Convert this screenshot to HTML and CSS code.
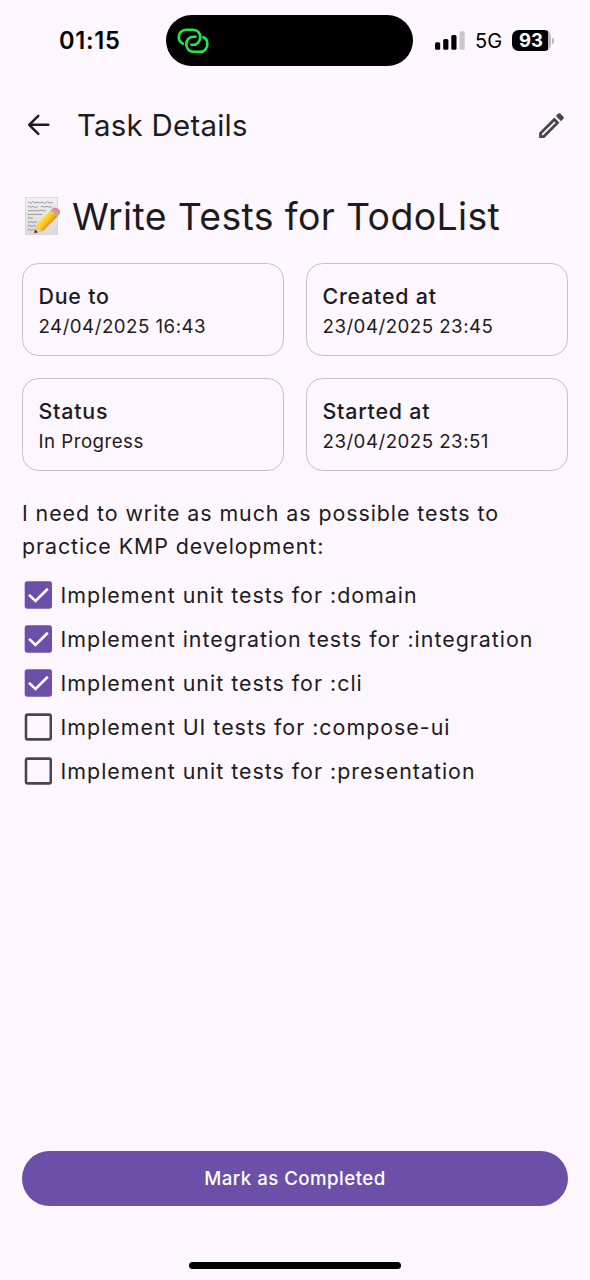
FILE: index.html
```html
<!DOCTYPE html>
<html lang="en">
<head>
<meta charset="utf-8">
<title>Task Details</title>
<link rel="stylesheet" href="styles.css">
</head>
<body>
<div class="screen">
  <header class="status-bar">
    <div class="clock">01:15</div>
    <div class="island">
      <svg class="link-icon" viewBox="0 0 32 26" width="32" height="26" fill="none" stroke="#1fe94f" stroke-width="2.6" stroke-linecap="round">
        <path d="M5.8 15.6C3.4 14.4 1.8 12.1 1.8 9.3C1.8 5 4.9 1.8 9.1 1.8H16C20.4 1.8 23.3 5 23.3 9.1C23.3 13.3 20.2 16.8 16.2 16.8H14.4"/>
        <path d="M18.4 8.8H16C12.2 8.8 9.3 12 9.3 16.1C9.3 20.5 12.2 23.8 16.2 23.8H23.1C27.5 23.8 30.4 20.3 30.4 16.1C30.4 12.8 29 10.3 26.4 9.3"/>
      </svg>
    </div>
    <div class="indicators">
      <svg class="signal" viewBox="0 0 30 19" width="30" height="19">
        <rect x="0" y="11.3" width="5.2" height="7.4" rx="1.5"/>
        <rect x="8.2" y="8" width="5.2" height="10.7" rx="1.5"/>
        <rect x="16.3" y="4" width="5.2" height="14.7" rx="1.5"/>
        <rect x="24.5" y="0.2" width="5.2" height="18.5" rx="1.5" fill="#cbc5cd"/>
      </svg>
      <span class="network">5G</span>
      <div class="battery"><div class="battery-body">93</div><div class="battery-tip"></div></div>
    </div>
  </header>

  <nav class="app-bar">
    <svg class="back" viewBox="0 0 24 24" width="24" height="24" fill="none" stroke="#1d1b20" stroke-width="2.5" stroke-linecap="round" stroke-linejoin="round">
      <path d="M21.3 11.8H2.2M11.3 2.8L2.2 11.8L11.3 20.8"/>
    </svg>
    <h1 class="bar-title">Task Details</h1>
    <svg class="edit" viewBox="0 0 24 24" width="33" height="33" fill="#49454f">
      <path d="M14.06 9.02l.92.92L5.92 19H5v-.92l9.06-9.06M17.66 3c-.25 0-.51.1-.7.29l-1.83 1.83 3.75 3.75 1.83-1.83c.39-.39.39-1.02 0-1.41l-2.34-2.34c-.2-.2-.45-.29-.71-.29zm-3.6 3.19L3 17.25V21h3.75L17.81 9.94l-3.75-3.75z"/>
    </svg>
  </nav>

  <main class="content">
    <h2 class="headline">
      <svg class="memo" viewBox="0 0 38 40" width="38" height="40">
        <defs>
          <linearGradient id="paper" x1="0" y1="0" x2="0" y2="1"><stop offset="0" stop-color="#f0efef"/><stop offset="1" stop-color="#dcdbdb"/></linearGradient>
          <linearGradient id="wood" gradientUnits="userSpaceOnUse" x1="20" y1="22" x2="28" y2="29"><stop offset="0" stop-color="#ffe23f"/><stop offset=".5" stop-color="#fcc526"/><stop offset="1" stop-color="#dc8d13"/></linearGradient>
        </defs>
        <rect x="3.3" y="1.3" width="32.4" height="37.4" fill="url(#paper)" stroke="#cfcdcf" stroke-width=".6"/>
        <g transform="translate(1 0)" fill="none" stroke="#7b797c" stroke-width=".7">
          <path d="M5 6.7q1-2 2 0t2-.3 2 .3h2q1-1.5 2 0h3q1-1.6 2 0t3-.2 3 .2h4"/>
          <path d="M5 10.9q1-1.6 2 0h2q1-1.6 2 0t4-.2M18 10.9q1-1.6 2 0h3q1-1.4 2 0h4"/>
          <path d="M5 14.8h3q1-1.7 2 0h2q1-1.4 2 0h3q1-1.7 2 0h4"/>
          <path d="M5 18.5h3q1-1.5 2 0h3q1-1.5 2 0h4"/>
          <path d="M5 22.1q1-1.5 2 0h3"/>
          <path d="M5 26.2h2q1-1.7 2 0h3q1-1.5 2 0"/>
          <path d="M5 30q1-1.6 2 0h3q1-1.4 2 0h2"/>
          <path d="M5 34.4q1-2.6 2-.8t2 .2h2"/>
        </g>
        <path d="M12 37.8L22 34.5L36 18.5L33 17L20 32Z" fill="#77747a" opacity=".32"/>
        <path d="M12.3 37.2L13.6 29.3L20.4 35.2Z" fill="#edc889"/>
        <path d="M12.3 37.2L12.9 33.6L15.9 36.2Z" fill="#38332f"/>
        <path d="M13.4 29.5L28.4 14.4Q32.8 16.2 35.2 20.7L20.6 35.2Q18.2 31.4 13.4 29.5Z" fill="url(#wood)"/>
        <path d="M28.3 14.5L30.2 12.7Q34.6 14.7 36.9 19L35.1 20.8Q32.7 16.5 28.3 14.5Z" fill="#9eaeb5"/>
        <path d="M30.1 12.7L31.7 11.6Q34.2 10.9 36.8 13.2T37.9 17.8L36.8 18.9Q34.5 14.7 30.1 12.7Z" fill="#ee8394"/>
      </svg>
      <span class="headline-text">Write Tests for TodoList</span>
    </h2>

    <section class="cards">
      <div class="card"><div class="card-title">Due to</div><div class="card-value">24/04/2025 16:43</div></div>
      <div class="card"><div class="card-title">Created at</div><div class="card-value">23/04/2025 23:45</div></div>
      <div class="card"><div class="card-title">Status</div><div class="card-value">In Progress</div></div>
      <div class="card"><div class="card-title">Started at</div><div class="card-value">23/04/2025 23:51</div></div>
    </section>

    <p class="description">I need to write as much as possible tests to practice KMP development:</p>

    <ul class="checklist">
      <li class="item"><svg class="box checked" viewBox="0 0 28 28"><rect x=".7" y=".3" width="27.3" height="27.4" rx="2.7"/><path d="M5.9 14.8L11.5 20L22.9 8.7"/></svg><span>Implement unit tests for :domain</span></li>
      <li class="item"><svg class="box checked" viewBox="0 0 28 28"><rect x=".7" y=".3" width="27.3" height="27.4" rx="2.7"/><path d="M5.9 14.8L11.5 20L22.9 8.7"/></svg><span>Implement integration tests for :integration</span></li>
      <li class="item"><svg class="box checked" viewBox="0 0 28 28"><rect x=".7" y=".3" width="27.3" height="27.4" rx="2.7"/><path d="M5.9 14.8L11.5 20L22.9 8.7"/></svg><span>Implement unit tests for :cli</span></li>
      <li class="item"><svg class="box" viewBox="0 0 28 28"><rect x="2" y="1.6" width="24.8" height="24.8" rx="1.7"/></svg><span>Implement UI tests for :compose-ui</span></li>
      <li class="item"><svg class="box" viewBox="0 0 28 28"><rect x="2" y="1.6" width="24.8" height="24.8" rx="1.7"/></svg><span>Implement unit tests for :presentation</span></li>
    </ul>
  </main>

  <footer class="footer">
    <button class="complete">Mark as Completed</button>
    <div class="home-indicator"></div>
  </footer>
</div>
</body>
</html>
```
FILE: styles.css
```css
* { box-sizing: border-box; }
body {
  margin: 0;
  background: #fef7ff;
  color: #1d1b20;
  font-family: Inter, "Liberation Sans", sans-serif;
}
.screen {
  width: 590px;
  height: 1280px;
  display: flex;
  flex-direction: column;
  overflow: hidden;
}
.status-bar {
  height: 81px;
  display: flex;
  align-items: center;
  color: #000;
  flex: none;
}
.clock {
  width: 166px;
  padding-left: 59px;
  font-size: 23.6px;
  font-weight: 600;
  letter-spacing: 0.75px;
}
.island {
  width: 247px;
  height: 51px;
  border-radius: 26px;
  background: #000;
  display: flex;
  align-items: center;
  padding-left: 11px;
}
.indicators {
  display: flex;
  align-items: center;
  margin-left: 22px;
}
.network {
  width: 37px;
  margin-left: 10px;
  font-size: 20px;
}
.battery { display: flex; align-items: center; gap: 1px; }
.battery-body {
  width: 39px;
  height: 21px;
  border-radius: 6.5px;
  background: linear-gradient(90deg, #000 36px, #bdb8bf 36px);
  color: #fff;
  font-size: 18.5px;
  font-weight: 700;
  line-height: 21px;
  padding-left: 7px;
}
.battery-tip {
  width: 2px;
  height: 6px;
  border-radius: 0 3px 3px 0;
  background: #bdb8bf;
}
.app-bar {
  height: 88px;
  flex: none;
  display: flex;
  align-items: center;
  padding: 0 22px 0 27px;
}
.bar-title {
  margin: 0 0 0 26px;
  padding-top: 2px;
  flex: 1;
  font-size: 29.4px;
  font-weight: 400;
  line-height: 38px;
  letter-spacing: 0.26px;
}
.content { padding: 22px 22px 0; flex: 1; }
.headline {
  margin: 0 0 22px;
  height: 50px;
  display: flex;
  align-items: center;
  font-size: 37.4px;
  font-weight: 400;
  letter-spacing: 0.37px;
  white-space: nowrap;
}
.headline-text { margin-left: 12px; }
.cards {
  display: grid;
  grid-template-columns: 1fr 1fr;
  gap: 22px;
}
.card {
  height: 93.2px;
  border: 1.4px solid #c5bfca;
  border-radius: 16.5px;
  padding: 16px 15.5px 14px;
}
.card-title {
  font-size: 21.4px;
  font-weight: 500;
  line-height: 33px;
  letter-spacing: 0.78px;
}
.card-value {
  font-size: 18.7px;
  line-height: 27.4px;
  letter-spacing: 0.48px;
}
.description {
  margin: 26px 0 0;
  font-size: 21.4px;
  line-height: 33px;
  letter-spacing: 0.93px;
}
.checklist {
  list-style: none;
  margin: 10px 0 0;
  padding: 0 0 0 2px;
}
.item {
  height: 44px;
  display: flex;
  align-items: center;
  gap: 8.6px;
  font-size: 21.4px;
  letter-spacing: 1px;
  white-space: nowrap;
}
.box {
  width: 28px;
  height: 28px;
  flex: none;
  fill: none;
  stroke: #49454f;
  stroke-width: 2.6;
}
.box.checked rect {
  fill: #6b4fa9;
  stroke: none;
}
.box.checked path {
  stroke: #fff;
  stroke-width: 2.6;
  stroke-linecap: square;
}
.footer {
  height: 129px;
  flex: none;
  padding: 0 22px;
  display: flex;
  flex-direction: column;
  align-items: center;
}
.complete {
  width: 100%;
  height: 55px;
  border: 0;
  border-radius: 28px;
  background: #6b4fa9;
  color: #fff;
  font: 500 18.7px/27px Inter, "Liberation Sans", sans-serif;
  letter-spacing: 0.45px;
}
.home-indicator {
  width: 212px;
  height: 7px;
  margin-top: 56px;
  border-radius: 4px;
  background: #000;
}
```
